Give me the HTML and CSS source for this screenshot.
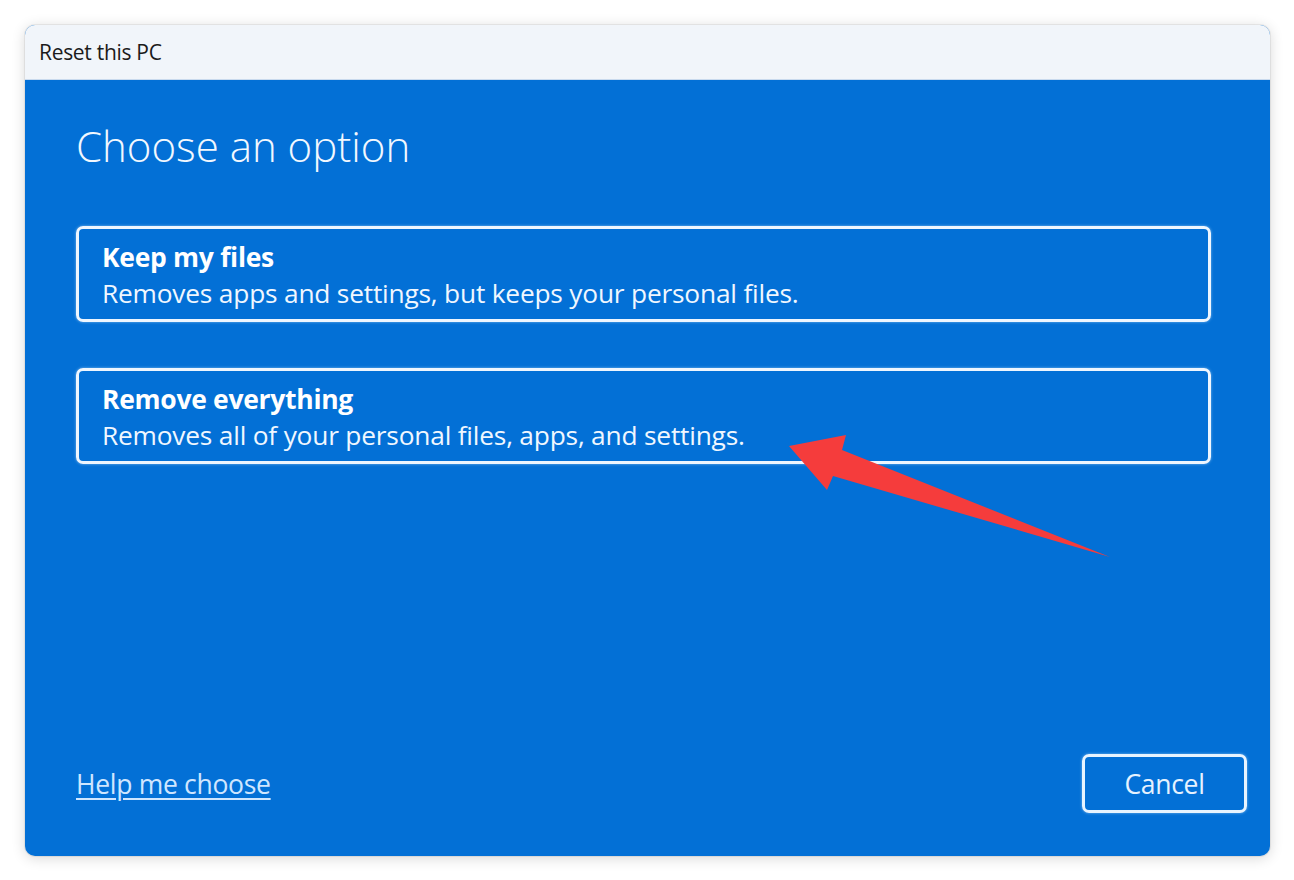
FILE: index.html
```html
<!DOCTYPE html>
<html lang="en">
<head>
<meta charset="utf-8">
<title>Reset this PC</title>
<link rel="stylesheet" href="styles.css">
</head>
<body>
<div class="page">
  <div class="window">
    <div class="titlebar">Reset this PC</div>
    <div class="content">
      <h1 class="heading">Choose an option</h1>
      <div class="options">
        <div class="option">
          <div class="option-title">Keep my files</div>
          <div class="option-desc">Removes apps and settings, but keeps your personal files.</div>
        </div>
        <div class="option">
          <div class="option-title">Remove everything</div>
          <div class="option-desc">Removes all of your personal files, apps, and settings.</div>
        </div>
      </div>
      <div class="footer">
        <a class="help" href="#">Help me choose</a>
        <button class="cancel" type="button">Cancel</button>
      </div>
    </div>
  </div>
  <svg class="arrow" width="1294" height="880" viewBox="0 0 1294 880" aria-hidden="true">
    <polygon points="789,446 846,435 842,450 1110,557 833,476 827,490" fill="#f53c3c"/>
  </svg>
</div>
</body>
</html>
```
FILE: styles.css
```css
html, body {
  margin: 0;
  padding: 0;
  background: #ffffff;
}
body {
  font-family: "Open Sans", "Noto Sans", "Liberation Sans", sans-serif;
}
.page {
  position: relative;
  width: 1294px;
  height: 880px;
  padding: 25px 24px 24px 25px;
  box-sizing: border-box;
}
.window {
  width: 1245px;
  height: 831px;
  border-radius: 10px;
  overflow: hidden;
  display: flex;
  flex-direction: column;
  box-shadow: 0 2px 14px rgba(0, 0, 0, 0.16), 0 0 0 1px rgba(0, 0, 0, 0.06);
  background: #0370d6;
}
.titlebar {
  height: 55px;
  flex: none;
  background: #f1f5fa;
  border-bottom: 1px solid #c9daee;
  box-sizing: border-box;
  padding: 13px 0 0 14px;
  font-size: 21px;
  color: #1b1b1b;
  letter-spacing: -0.3px;
}
.content {
  flex: 1;
  display: flex;
  flex-direction: column;
  padding: 0 23px 43px 51px;
  color: #fff;
}
.heading {
  margin: 37px 0 0 0;
  font-weight: 300;
  font-size: 42px;
  line-height: 58px;
  color: #f2f8ff;
}
.options {
  margin: 51px 36px 0 0;
  display: flex;
  flex-direction: column;
  gap: 46px;
}
.option {
  border: 3px solid #eef6ff;
  border-radius: 7px;
  padding: 10px 23px 8px;
  box-shadow: 0 0 3px rgba(200, 230, 255, 0.6);
}
.option-title {
  font-weight: 700;
  font-size: 26.5px;
  line-height: 36px;
  letter-spacing: -0.3px;
}
.option-desc {
  font-size: 26.3px;
  line-height: 36px;
  color: #f0f7ff;
  letter-spacing: -0.2px;
}
.footer {
  margin-top: auto;
  display: flex;
  align-items: center;
  justify-content: space-between;
}
.help {
  font-size: 26.5px;
  color: #cfe6ff;
  text-decoration: underline;
  text-underline-offset: 4px;
  text-decoration-thickness: 1.5px;
  letter-spacing: -0.3px;
}
.cancel {
  width: 165px;
  height: 59px;
  border: 3px solid #e8f4ff;
  border-radius: 7px;
  background: transparent;
  color: #e6f2ff;
  font-family: inherit;
  font-size: 26.5px;
  letter-spacing: -0.3px;
  box-shadow: 0 0 3px rgba(200, 230, 255, 0.6);
}
.arrow {
  position: absolute;
  left: 0;
  top: 0;
  pointer-events: none;
}
```
